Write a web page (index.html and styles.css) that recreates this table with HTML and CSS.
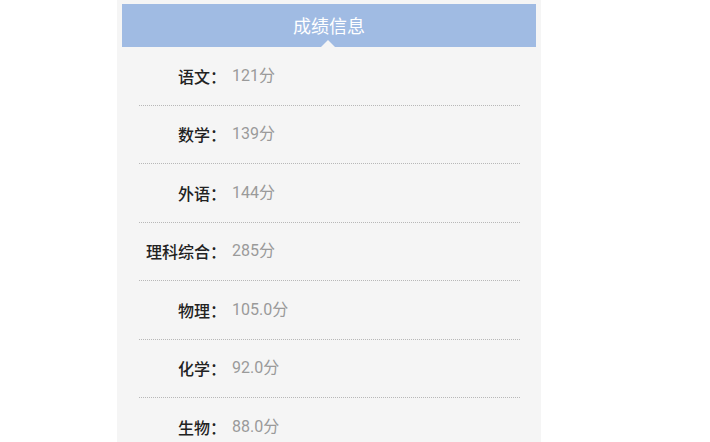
FILE: index.html
```html
<!DOCTYPE html>
<html lang="zh">
<head>
<meta charset="utf-8">
<link rel="stylesheet" href="styles.css">
</head>
<body>
<div class="page">
  <div class="panel">
    <div class="header">成绩信息<span class="notch"></span></div>
    <div class="row"><span class="label">语文：</span><span class="value">121分</span></div>
    <div class="row"><span class="label">数学：</span><span class="value">139分</span></div>
    <div class="row"><span class="label">外语：</span><span class="value">144分</span></div>
    <div class="row"><span class="label">理科综合：</span><span class="value">285分</span></div>
    <div class="row"><span class="label">物理：</span><span class="value">105.0分</span></div>
    <div class="row"><span class="label">化学：</span><span class="value">92.0分</span></div>
    <div class="row last"><span class="label">生物：</span><span class="value">88.0分</span></div>
  </div>
</div>
</body>
</html>
```
FILE: styles.css
```css
html, body {
  margin: 0;
  padding: 0;
  background: #ffffff;
  overflow: hidden;
}
body {
  font-family: Roboto, "Noto Sans CJK SC", sans-serif;
}
.page {
  width: 710px;
  height: 442px;
  display: flex;
  justify-content: flex-start;
}
.panel {
  margin-left: 117px;
  width: 424px;
  height: 442px;
  background: #f5f5f5;
  padding-top: 4px;
  box-sizing: border-box;
}
.header {
  position: relative;
  margin: 0 5px 0 5px;
  height: 43px;
  background: #a0bbe3;
  color: #ffffff;
  font-size: 18px;
  line-height: 43px;
  text-align: center;
  font-family: "Noto Sans CJK SC", sans-serif;
}
.notch {
  position: absolute;
  left: 199px;
  bottom: 0;
  width: 0;
  height: 0;
  border-left: 7px solid transparent;
  border-right: 7px solid transparent;
  border-bottom: 7px solid #f5f5f5;
}
.row {
  margin: 0 21px 0 22px;
  padding: 16.5px 0 17px 0;
  line-height: 24px;
  border-bottom: 1px dotted #b8b8b8;
  display: flex;
  align-items: center;
}
.label {
  width: 87px;
  text-align: right;
  font-family: "Noto Sans CJK SC", sans-serif;
  font-size: 16px;
  font-weight: 500;
  color: #222222;
}
.value {
  margin-left: 6px;
  font-family: Roboto, "Noto Sans CJK SC", sans-serif;
  font-size: 16px;
  color: #9a9a9a;
}
```
